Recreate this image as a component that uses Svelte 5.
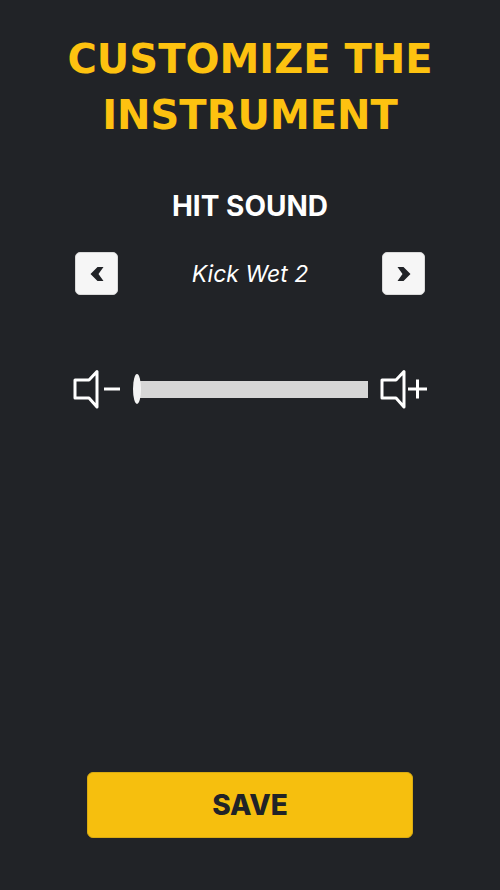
<script>
  const sounds = ['Kick Dry 1', 'Kick Wet 1', 'Kick Wet 2', 'Snare 1'];
  let index = $state(2);
  let volume = $state(0);

  function prev() {
    index = (index + sounds.length - 1) % sounds.length;
  }

  function next() {
    index = (index + 1) % sounds.length;
  }
</script>

<div class="page">
  <h1 class="title">CUSTOMIZE THE<br />INSTRUMENT</h1>

  <h2 class="subtitle">HIT SOUND</h2>

  <div class="picker">
    <button class="arrow" aria-label="Previous sound" onclick={prev}>
      <svg viewBox="0 0 14 14" width="14" height="14">
        <path d="M7.5 0H13.5L8.5 7L13.5 14H7.5L0.5 7Z" fill="#212327" />
      </svg>
    </button>
    <span class="sound">{sounds[index]}</span>
    <button class="arrow" aria-label="Next sound" onclick={next}>
      <svg viewBox="0 0 14 14" width="14" height="14">
        <path d="M6.5 0H0.5L5.5 7L0.5 14H6.5L13.5 7Z" fill="#212327" />
      </svg>
    </button>
  </div>

  <div class="volume">
    <svg class="icon" viewBox="0 0 50 40" width="50" height="40">
      <path d="M3 11H17L25 2.5V38L17 29H3Z" />
      <path d="M32 20H48" />
    </svg>
    <input class="slider" type="range" min="0" max="100" bind:value={volume} aria-label="Volume" />
    <svg class="icon" viewBox="0 0 50 40" width="50" height="40">
      <path d="M3 11H17L25 2.5V38L17 29H3Z" />
      <path d="M29 20H48M38.5 10.5V29.5" />
    </svg>
  </div>

  <button class="save">SAVE</button>
</div>

<style>
  :global(body) {
    background: #212327;
  }

  .page {
    height: 890px;
    box-sizing: border-box;
    display: flex;
    flex-direction: column;
    align-items: center;
    padding: 31px 0 52px;
    font-family: "Inter", "Liberation Sans", sans-serif;
    color: #fff;
  }

  .title {
    margin: 0;
    font-family: "DejaVu Sans", "Liberation Sans", sans-serif;
    font-size: 40px;
    font-weight: 700;
    line-height: 56px;
    text-align: center;
    color: #fdc210;
  }

  .subtitle {
    margin: 45px 0 0;
    font-size: 28px;
    font-weight: 700;
    line-height: 36px;
  }

  .picker {
    width: 350px;
    margin-top: 28px;
    display: flex;
    align-items: center;
    justify-content: space-between;
  }

  .arrow {
    width: 43px;
    height: 43px;
    padding: 0;
    display: flex;
    align-items: center;
    justify-content: center;
    border: 1px solid #d9d9d9;
    border-radius: 5px;
    background: #f6f6f6;
    cursor: pointer;
  }

  .sound {
    font-size: 23px;
    font-style: italic;
    font-weight: 400;
  }

  .volume {
    margin-top: 74px;
    display: flex;
    align-items: center;
    gap: 11px;
  }

  .icon {
    display: block;
    fill: none;
    stroke: #fff;
    stroke-width: 3;
    stroke-linejoin: round;
  }

  .slider {
    appearance: none;
    -webkit-appearance: none;
    width: 235px;
    height: 30px;
    margin: 0;
    background: transparent;
    cursor: pointer;
  }

  .slider::-webkit-slider-runnable-track {
    height: 17px;
    background: linear-gradient(to right, transparent 4px, #d6d6d6 4px);
  }

  .slider::-webkit-slider-thumb {
    -webkit-appearance: none;
    width: 8px;
    height: 30px;
    margin-top: -6.5px;
    border-radius: 50%;
    background: #f4f4f4;
  }

  .save {
    width: 326px;
    height: 66px;
    margin-top: auto;
    border: 1px solid #d9ab12;
    border-radius: 6px;
    background: #f6bf0e;
    color: #212327;
    font-family: inherit;
    font-size: 28px;
    font-weight: 800;
    cursor: pointer;
  }
</style>
